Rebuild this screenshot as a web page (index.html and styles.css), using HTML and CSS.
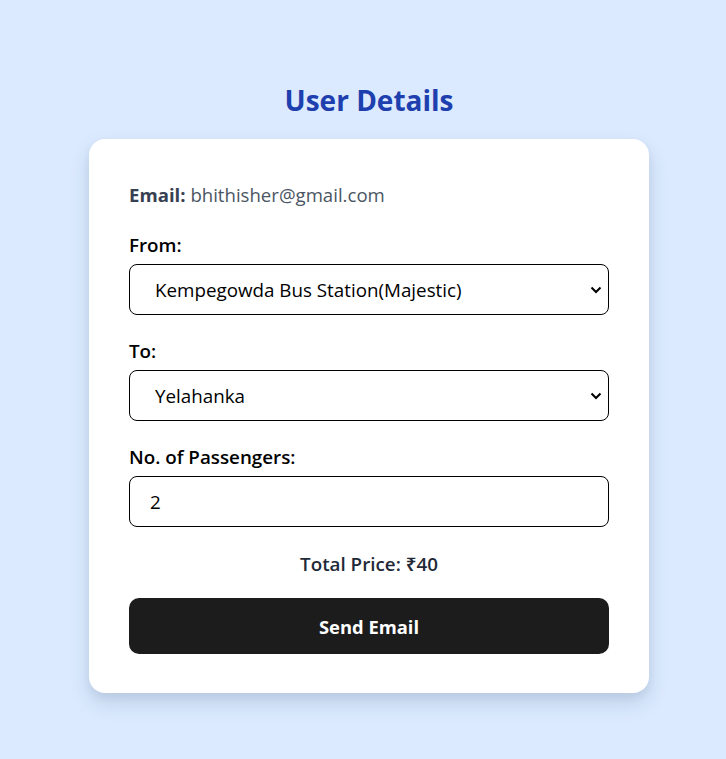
FILE: index.html
```html
<!DOCTYPE html>
<html lang="en">
<head>
<meta charset="utf-8">
<title>User Details</title>
<link rel="stylesheet" href="styles.css">
</head>
<body>
<main class="page">
  <h1 class="title">User Details</h1>
  <form class="card">
    <p class="email"><strong>Email:</strong> bhithisher@gmail.com</p>
    <div class="field">
      <label class="label" for="from">From:</label>
      <select id="from" class="control select">
        <option>Kempegowda Bus Station(Majestic)</option>
      </select>
    </div>
    <div class="field">
      <label class="label" for="to">To:</label>
      <select id="to" class="control select">
        <option>Yelahanka</option>
      </select>
    </div>
    <div class="field field-last">
      <label class="label" for="pax">No. of Passengers:</label>
      <input id="pax" class="control" type="text" value="2">
    </div>
    <p class="total">Total Price: ₹40</p>
    <button type="button" class="btn">Send Email</button>
  </form>
</main>
</body>
</html>
```
FILE: styles.css
```css
* { box-sizing: border-box; }
html, body { margin: 0; padding: 0; }
body {
  background: #dbeafe;
  font-family: "Open Sans", "Noto Sans", sans-serif;
  min-height: 759px;
}
.page {
  display: flex;
  flex-direction: column;
  align-items: center;
  padding-top: 80px;
  padding-left: 12px;
}
.title {
  margin: 0 0 19px;
  font-size: 28px;
  line-height: 40px;
  font-weight: 700;
  color: #1e40af;
}
.card {
  width: 560px;
  background: #fff;
  border-radius: 16px;
  padding: 42px 40px 39px;
  box-shadow: 0 10px 20px rgba(30, 58, 100, 0.15), 0 4px 8px rgba(30, 58, 100, 0.06);
  display: flex;
  flex-direction: column;
}
.email {
  margin: 0 0 24px;
  font-size: 18.6px;
  line-height: 28px;
  color: #4b5563;
}
.email strong { color: #374151; font-weight: 700; }
.field {
  display: flex;
  flex-direction: column;
  gap: 7px;
  margin-bottom: 24px;
}
.field-last { margin-bottom: 25px; }
.label {
  font-size: 18.8px;
  line-height: 24px;
  font-weight: 600;
  color: #000;
}
.control {
  width: 480px;
  height: 51px;
  border: 1px solid #000;
  border-radius: 8px;
  padding: 0 24px 0 20px;
  font-family: inherit;
  font-size: 18.8px;
  color: #000;
  background: #fff;
}
.select {
  appearance: none;
  -webkit-appearance: none;
  padding-left: 25px;
  background-image: url("data:image/svg+xml,%3Csvg xmlns='http://www.w3.org/2000/svg' width='12' height='8' viewBox='0 0 12 8'%3E%3Cpath d='M1.5 1.5 6 6 10.5 1.5' fill='none' stroke='%23000' stroke-width='2'/%3E%3C/svg%3E");
  background-repeat: no-repeat;
  background-position: right 6px center;
  background-size: 12px 8px;
}
.total {
  margin: 0 0 22px;
  text-align: center;
  font-size: 18.8px;
  line-height: 24px;
  font-weight: 600;
  color: #1f2937;
}
.btn {
  height: 56px;
  border: 0;
  border-radius: 10px;
  background: #1c1c1c;
  color: #fff;
  font-family: inherit;
  font-size: 18.4px;
  font-weight: 700;
}
```
